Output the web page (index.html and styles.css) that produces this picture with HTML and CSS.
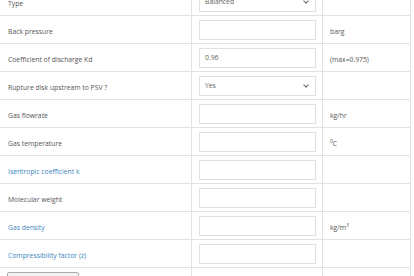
FILE: index.html
```html
<!DOCTYPE html>
<html lang="en">
<head>
    <meta charset="UTF-8">
    <title>PSV sizing - gas</title>
    <link rel="stylesheet" href="styles.css">
</head>
<body>
    <table class="calc-table">
        <tr>
            <td class="label">Type</td>
            <td class="field">
                <div class="select-box">Balanced<span class="chevron"></span></div>
            </td>
            <td class="unit"></td>
        </tr>
        <tr>
            <td class="label">Back pressure</td>
            <td class="field"><div class="input-box"></div></td>
            <td class="unit">barg</td>
        </tr>
        <tr>
            <td class="label">Coefficient of discharge Kd</td>
            <td class="field"><div class="input-box">0.96</div></td>
            <td class="unit">(max=0.975)</td>
        </tr>
        <tr>
            <td class="label">Rupture disk upstream to PSV ?</td>
            <td class="field">
                <div class="select-box">Yes<span class="chevron"></span></div>
            </td>
            <td class="unit"></td>
        </tr>
        <tr>
            <td class="label">Gas flowrate</td>
            <td class="field"><div class="input-box"></div></td>
            <td class="unit">kg/hr</td>
        </tr>
        <tr>
            <td class="label">Gas temperature</td>
            <td class="field"><div class="input-box"></div></td>
            <td class="unit"><sup>0</sup>C</td>
        </tr>
        <tr>
            <td class="label link">Isentropic coefficient k</td>
            <td class="field"><div class="input-box"></div></td>
            <td class="unit"></td>
        </tr>
        <tr>
            <td class="label">Molecular weight</td>
            <td class="field"><div class="input-box"></div></td>
            <td class="unit"></td>
        </tr>
        <tr>
            <td class="label link">Gas density</td>
            <td class="field"><div class="input-box"></div></td>
            <td class="unit">kg/m<sup>3</sup></td>
        </tr>
        <tr>
            <td class="label link">Compressibility factor (z)</td>
            <td class="field"><div class="input-box"></div></td>
            <td class="unit"></td>
        </tr>
        <tr class="action-row">
            <td class="label"><button class="calc-btn">Calculate</button></td>
            <td class="field"></td>
            <td class="unit"></td>
        </tr>
    </table>
</body>
</html>
```
FILE: styles.css
```css
body {
    margin: 0;
    background-color: #ffffff;
    font-family: "Open Sans", "Liberation Sans", sans-serif;
    font-size: 6.8px;
    color: #555555;
}
.calc-table {
    border-collapse: collapse;
    margin-top: -13px;
    width: 409px;
    table-layout: fixed;
}
.calc-table td {
    border: 1px solid #e2e2e2;
    line-height: 10px;
    vertical-align: middle;
}
.calc-table tr td:first-child {
    border-left: none;
}
.label {
    width: 177px;
    padding: 6px 6px 1px 8px;
}
.field {
    width: 117px;
    padding: 4px 6px 3px 7px;
}
.unit {
    width: 74px;
    padding: 6px 6px 1px 7px;
}
.link {
    color: #3a86bd;
}
.input-box,
.select-box {
    box-sizing: border-box;
    height: 20px;
    width: 117px;
    border: 1px solid #e0e0e0;
    padding: 0 5px;
    line-height: 18px;
    color: #666666;
    background-color: #ffffff;
}
.select-box {
    position: relative;
}
.chevron {
    position: absolute;
    right: 7px;
    top: 6px;
    width: 3px;
    height: 3px;
    border-right: 1px solid #666;
    border-bottom: 1px solid #666;
    transform: rotate(45deg);
}
sup {
    font-size: 5px;
    vertical-align: top;
    line-height: 5px;
}
.action-row td {
    vertical-align: top;
    padding-top: 4px;
}
.calc-btn {
    display: block;
    font-family: inherit;
    font-size: 6.8px;
    width: 72px;
    height: 18px;
    margin-left: -1px;
    background-color: #f2f2f2;
    border: 1px solid #aaaaaa;
    border-radius: 2px;
    color: #333;
    text-align: left;
}
```
